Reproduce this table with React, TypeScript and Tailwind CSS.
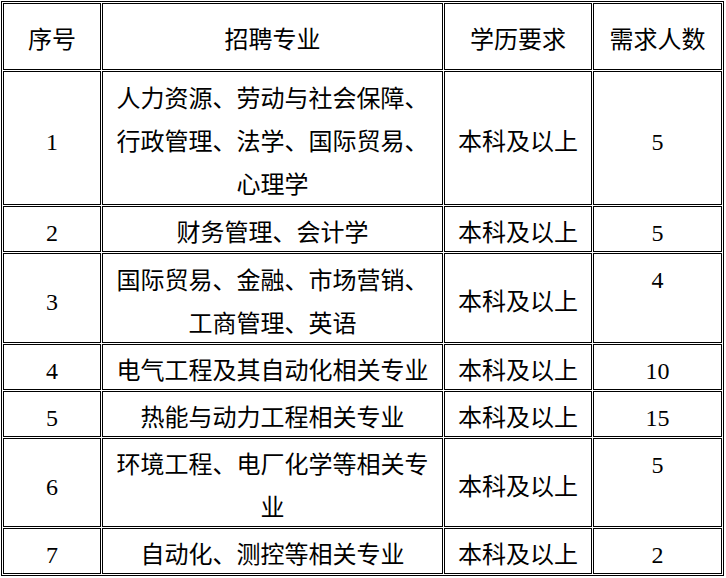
type Row = {
  no: string;
  major: string[];
  edu: string;
  count: string;
  countTop?: boolean;
  h: string;
};

const rows: Row[] = [
  {
    no: "1",
    major: ["人力资源、劳动与社会保障、", "行政管理、法学、国际贸易、", "心理学"],
    edu: "本科及以上",
    count: "5",
    h: "h-[134px]",
  },
  { no: "2", major: ["财务管理、会计学"], edu: "本科及以上", count: "5", h: "h-[46px]" },
  {
    no: "3",
    major: ["国际贸易、金融、市场营销、", "工商管理、英语"],
    edu: "本科及以上",
    count: "4",
    countTop: true,
    h: "h-[90px]",
  },
  { no: "4", major: ["电气工程及其自动化相关专业"], edu: "本科及以上", count: "10", h: "h-[46px]" },
  { no: "5", major: ["热能与动力工程相关专业"], edu: "本科及以上", count: "15", h: "h-[46px]" },
  {
    no: "6",
    major: ["环境工程、电厂化学等相关专", "业"],
    edu: "本科及以上",
    count: "5",
    countTop: true,
    h: "h-[89px]",
  },
  { no: "7", major: ["自动化、测控等相关专业"], edu: "本科及以上", count: "2", h: "h-[46px]" },
];

const cell = "border border-black px-[4px] pb-0 text-center align-middle";

export default function App() {
  return (
    <div className="bg-white pl-[1px] pt-[1px] w-[726px] h-[578px] overflow-hidden">
      <table
        className="table-fixed w-[723px] border-separate border-spacing-[1px] border border-black text-black text-[24px] leading-[43px]"
        style={{ fontFamily: '"Liberation Serif", "Noto Sans CJK SC", serif' }}
      >
        <thead>
          <tr>
            <th className={`${cell} font-normal w-[98px] h-[67px] pt-[8px]`}>序号</th>
            <th className={`${cell} font-normal w-[341px] pt-[8px]`}>招聘专业</th>
            <th className={`${cell} font-normal w-[148px] pt-[8px]`}>学历要求</th>
            <th className={`${cell} font-normal w-[129px] pt-[8px]`}>需求人数</th>
          </tr>
        </thead>
        <tbody>
          {rows.map((r) => (
            <tr key={r.no}>
              <td className={`${cell} ${r.h} pt-[1px]`}>
                <div className="translate-y-[4px]">{r.no}</div>
              </td>
              <td className={`${cell} pt-[1px]`}>
                <div className="translate-y-[4px]">
                  {r.major.map((line, i) => (
                    <div key={i}>{line}</div>
                  ))}
                </div>
              </td>
              <td className={`${cell} pt-[1px]`}>
                <div className="translate-y-[4px]">{r.edu}</div>
              </td>
              <td className={`${cell} pt-[1px] ${r.countTop ? "align-top" : ""}`}>
                <div className="translate-y-[4px]">{r.count}</div>
              </td>
            </tr>
          ))}
        </tbody>
      </table>
    </div>
  );
}
